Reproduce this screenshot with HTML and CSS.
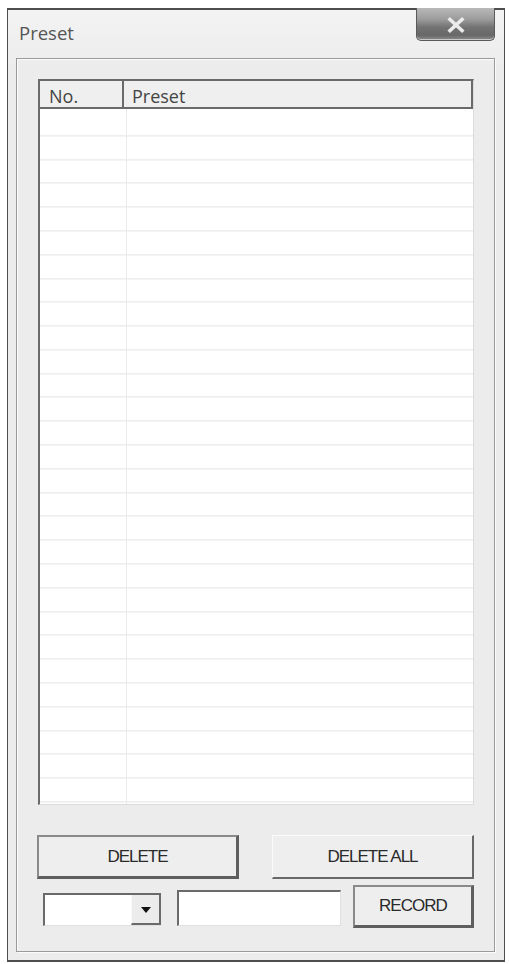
FILE: index.html
```html
<!DOCTYPE html>
<html>
<head>
<meta charset="utf-8">
<title>Preset</title>
<link rel="stylesheet" href="styles.css">
</head>
<body>
<div class="window">
  <div class="titlebar">
    <div class="title">Preset</div>
    <div class="close">
      <svg width="20" height="16" viewBox="0 0 20 16">
        <path d="M4 2.5 L16 13.5 M16 2.5 L4 13.5" stroke="#ececec" stroke-width="3.6" stroke-linecap="square" fill="none"/>
      </svg>
    </div>
  </div>
  <div class="frame">
    <div class="list">
      <div class="list-head">
        <div class="col-no">No.</div>
        <div class="col-preset">Preset</div>
      </div>
      <div class="list-body"></div>
    </div>
    <div class="row1">
      <div class="btn btn-focus btn-wide">DELETE</div>
      <div class="btn btn-wide">DELETE ALL</div>
    </div>
    <div class="row2">
      <div class="combo">
        <div class="combo-field"></div>
        <div class="combo-arrow"><span class="tri"></span></div>
      </div>
      <div class="input"></div>
      <div class="btn btn-focus btn-record">RECORD</div>
    </div>
  </div>
</div>
</body>
</html>
```
FILE: styles.css
```css
html, body {
  margin: 0;
  padding: 0;
  background: #ffffff;
}
body {
  width: 509px;
  height: 964px;
  overflow: hidden;
  font-family: "Open Sans", "Noto Sans", sans-serif;
}
.window {
  margin: 8px 0 0 7px;
  width: 498px;
  height: 954px;
  box-sizing: border-box;
  border: 1px solid #4e4e4e;
  border-top-width: 2px;
  border-bottom-width: 2px;
  background: linear-gradient(to bottom, #f3f3f3 0, #ececec 60px, #ececec 100%);
  padding: 0 9px 0 8px;
  display: flex;
  flex-direction: column;
}
.titlebar {
  height: 48px;
  display: flex;
  justify-content: space-between;
  align-items: flex-start;
}
.title {
  padding: 10px 0 0 3px;
  font-size: 18.5px;
  line-height: 26px;
  color: #555;
}
.close {
  margin-top: -2px;
  width: 79px;
  height: 33px;
  box-sizing: border-box;
  border: 1px solid #5a5a5a;
  border-top: none;
  border-radius: 0 0 5px 5px;
  background: linear-gradient(to bottom, #b9b9b9 0, #9c9c9c 35%, #737373 60%, #686868 85%, #8c8c8c 100%);
  box-shadow: inset 0 -1px 0 #c8c8c8;
  display: flex;
  align-items: center;
  justify-content: center;
}
.close svg {
  display: block;
  margin-top: 1px;
}
.frame {
  height: 894px;
  box-sizing: border-box;
  border: 1px solid #9a9a9a;
  box-shadow: inset 1px 1px 0 #fbfbfb, 1px 1px 0 #fbfbfb;
  padding: 20px 20px 0 21px;
  display: flex;
  flex-direction: column;
}
.list {
  height: 726px;
  box-sizing: border-box;
  border-top: 2px solid #6a6a6a;
  border-left: 2px solid #6a6a6a;
  border-right: 1px solid #dcdcdc;
  border-bottom: 1px solid #dcdcdc;
  background: #fff;
  display: flex;
  flex-direction: column;
}
.list-head {
  height: 28px;
  box-sizing: border-box;
  border-bottom: 2px solid #6a6a6a;
  border-right: 2px solid #6a6a6a;
  background: #efefef;
  display: flex;
  font-size: 18px;
  line-height: 24px;
  color: #444;
}
.col-no {
  width: 84px;
  box-sizing: border-box;
  border-right: 2px solid #6a6a6a;
  padding: 3px 0 0 9px;
}
.col-preset {
  padding: 3px 0 0 8px;
}
.list-body {
  flex: 1;
  background:
    linear-gradient(to right, transparent 0, transparent 86px, #ebebeb 86px, #ebebeb 87px, transparent 87px),
    repeating-linear-gradient(to bottom, transparent 0, transparent 22.79px, #e3e3e3 22.79px, #e3e3e3 23.79px);
  background-position: 0 0, 0 3.4px;
  background-repeat: no-repeat, repeat;
}
.row1 {
  margin-top: 30px;
  margin-left: -1px;
  display: flex;
  justify-content: space-between;
}
.btn {
  box-sizing: border-box;
  background: #eeeeee;
  border-top: 1px solid #fafafa;
  border-left: 1px solid #fafafa;
  border-right: 2px solid #686868;
  border-bottom: 2px solid #686868;
  font-family: "Liberation Sans", Arial, sans-serif;
  font-size: 17px;
  letter-spacing: -1px;
  color: #2a2a2a;
  display: flex;
  align-items: center;
  justify-content: center;
}
.btn-focus {
  border-top: 2px solid #8a8a8a;
  border-left: 2px solid #8a8a8a;
  border-right: 3px solid #5e5e5e;
  border-bottom: 3px solid #5e5e5e;
}
.btn-wide {
  width: 202px;
  height: 44px;
}
.row2 {
  margin-top: 6px;
  display: flex;
  align-items: flex-start;
}
.combo {
  margin: 8px 0 0 5px;
  width: 119px;
  height: 33px;
  box-sizing: border-box;
  border-top: 2px solid #6a6a6a;
  border-left: 2px solid #6a6a6a;
  border-bottom: 1px solid #e0e0e0;
  background: #fff;
  display: flex;
}
.combo-field {
  flex: 1;
}
.combo-arrow {
  width: 30px;
  box-sizing: border-box;
  background: #ececec;
  border-left: 1px solid #fafafa;
  border-right: 2px solid #6a6a6a;
  border-bottom: 2px solid #6a6a6a;
  display: flex;
  align-items: center;
  justify-content: center;
}
.tri {
  width: 0;
  height: 0;
  border-left: 5px solid transparent;
  border-right: 5px solid transparent;
  border-top: 6px solid #111;
  margin-top: 2px;
}
.input {
  margin: 5px 0 0 16px;
  width: 165px;
  height: 36px;
  box-sizing: border-box;
  border-top: 2px solid #6a6a6a;
  border-left: 2px solid #6a6a6a;
  border-right: 1px solid #e0e0e0;
  border-bottom: 1px solid #e0e0e0;
  background: #fff;
}
.btn-record {
  margin-left: 12px;
  width: 122px;
  height: 43px;
}
```
